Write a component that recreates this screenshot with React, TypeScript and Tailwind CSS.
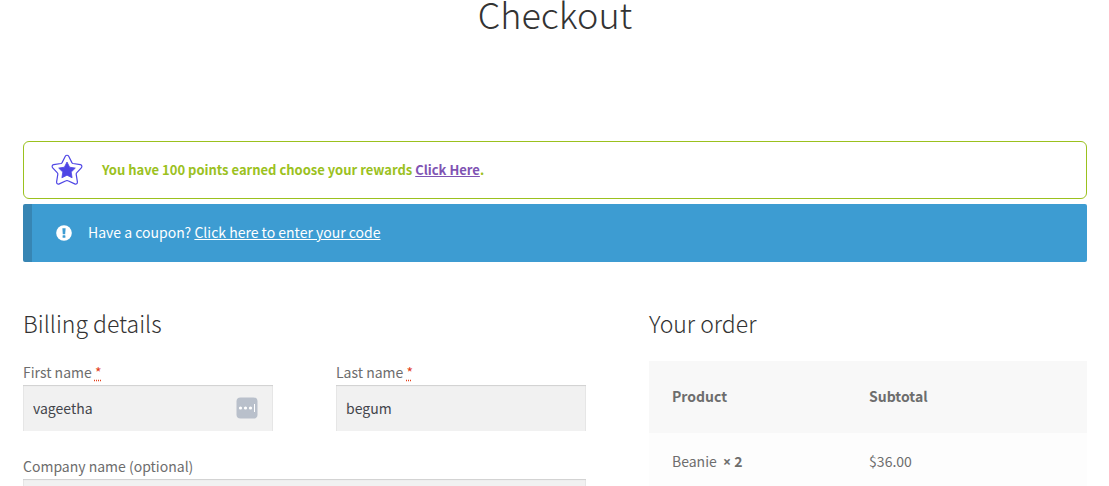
import type { ReactNode } from "react";

type FieldProps = {
  id: string;
  label: string;
  value?: string;
  required?: boolean;
  children?: ReactNode;
};

const order = [{ name: "Beanie", quantity: 2, subtotal: "$36.00" }];

function RewardStar() {
  return (
    <svg viewBox="0 0 32 32" className="h-8 w-8 shrink-0" fill="none" aria-hidden="true">
      <path
        d="M14.300 2.200c.7-1.300 2.700-1.300 3.400 0l3.200 6.400c.3.5.7.8 1.200.9l7.200 1.200c1.600.3 2.100 2 1 3.200l-4.700 5c-.4.400-.5.900-.4 1.400l1.200 7.600c.2 1.600-1.200 2.700-2.700 2L17 26.800a2.200 2.200 0 0 0-2 0l-6.700 3.100c-1.500.7-2.900-.4-2.700-2l1.200-7.600c.1-.5 0-1-.4-1.400l-4.700-5c-1.100-1.200-.6-2.900 1-3.200l7.200-1.200c.5-.1.9-.4 1.200-.9z"
        stroke="#4f46e5"
        strokeWidth="1.200"
      />
      <path
        d="m16 8 2.600 5.200 5.700.9-4.100 4 .9 5.700-5.100-2.600-5.100 2.600.9-5.700-4.100-4 5.700-.9z"
        fill="#4f46e5"
        stroke="#4f46e5"
        strokeWidth="0.800"
        strokeLinejoin="round"
      />
    </svg>
  );
}

function NoticeIcon() {
  return (
    <svg viewBox="0 0 16 16" className="h-4 w-4 shrink-0" aria-hidden="true">
      <circle cx="8" cy="8" r="7.800" fill="#fff" />
      <path d="M6.400 3.200h3.200L9.200 9.200H6.800z" fill="#3d9cd2" />
      <rect x="6.600" y="10.300" width="2.800" height="2.500" rx="0.400" fill="#3d9cd2" />
    </svg>
  );
}

function AutofillIcon() {
  return (
    <svg viewBox="0 0 22 22" className="h-[22px] w-[22px]" aria-hidden="true">
      <rect x="0.500" y="0.500" width="21" height="21" rx="4" fill="#b9c0cb" />
      <circle cx="4.500" cy="11" r="1.600" fill="#fff" />
      <circle cx="9.500" cy="11" r="1.600" fill="#fff" />
      <circle cx="14.500" cy="11" r="1.600" fill="#fff" />
      <rect x="18" y="7" width="1" height="8" fill="#fff" />
    </svg>
  );
}

function Field({ id, label, value, required, children }: FieldProps) {
  return (
    <div>
      <label htmlFor={id} className="block leading-[26px]">
        {label}
        {required && (
          <>
            {" "}
            <abbr title="required" className="text-[#e2401c] underline decoration-dotted underline-offset-2">
              *
            </abbr>
          </>
        )}
      </label>
      <div className="relative">
        <input
          id={id}
          type="text"
          defaultValue={value}
          className="block h-[46px] w-full bg-[#f1f1f1] px-2.5 text-[#43454b] shadow-[inset_0_2px_1px_-1px_#d0d0d0,inset_1px_0_0_#e6e6e6,inset_-1px_0_0_#e6e6e6]"
        />
        {children}
      </div>
    </div>
  );
}

export default function App() {
  return (
    <main className="h-screen overflow-hidden bg-white pr-[22px] pl-[23px] font-['Noto_Sans_CJK_SC',sans-serif] text-sm leading-[26px] text-[#6d6d6d]">
      <h1 className="mb-[115px] text-center text-4xl leading-[26px] font-light text-[#333333]">Checkout</h1>

      <div className="flex h-[58px] items-center gap-[19px] rounded-md border border-[#9bc11e] pl-[27px] text-[13px] font-bold text-[#9bc11e]">
        <RewardStar />
        <p>
          You have 100 points earned choose your rewards{" "}
          <a href="#rewards" className="text-[#7f54b3] underline">
            Click Here
          </a>
          .
        </p>
      </div>

      <div className="mt-[5px] flex h-[58px] items-center gap-4 rounded-xs border-l-9 border-[#3785b3] bg-[#3d9cd2] pl-6 text-white">
        <NoticeIcon />
        <p className="pb-0.5">
          Have a coupon?{" "}
          <a href="#coupon" className="underline">
            Click here to enter your code
          </a>
        </p>
      </div>

      <div className="mt-[47px] grid grid-cols-[563fr_438fr] gap-[63px]">
        <section>
          <h2 className="mb-[22px] text-[23px] leading-7 font-light text-[#333333]">Billing details</h2>
          <form className="grid grid-cols-2 gap-x-[63px] gap-y-[22px]">
            <Field id="first-name" label="First name" value="vageetha" required>
              <button type="button" aria-label="Autofill" className="absolute top-3 right-[15px]">
                <AutofillIcon />
              </button>
            </Field>
            <Field id="last-name" label="Last name" value="begum" required />
            <div className="col-span-2">
              <Field id="company" label="Company name (optional)" />
            </div>
          </form>
        </section>

        <section>
          <h2 className="mb-6 text-[23px] leading-7 font-light text-[#333333]">Your order</h2>
          <table className="w-full table-fixed text-left">
            <thead className="bg-[#f8f8f8]">
              <tr>
                <th className="w-[45%] px-[23px] pt-[22px] pb-6 font-bold">Product</th>
                <th className="px-[23px] pt-[22px] pb-6 font-bold">Subtotal</th>
              </tr>
            </thead>
            <tbody className="bg-[#fdfdfd]">
              {order.map((item) => (
                <tr key={item.name} className="align-top">
                  <td className="px-[23px] pt-[15px] pb-4">
                    {item.name}&nbsp;{" "}
                    <strong>
                      <span className="font-['Open_Sans',sans-serif] leading-none">×</span> {item.quantity}
                    </strong>
                  </td>
                  <td className="px-[23px] pt-[15px] pb-4">{item.subtotal}</td>
                </tr>
              ))}
            </tbody>
          </table>
        </section>
      </div>
    </main>
  );
}
